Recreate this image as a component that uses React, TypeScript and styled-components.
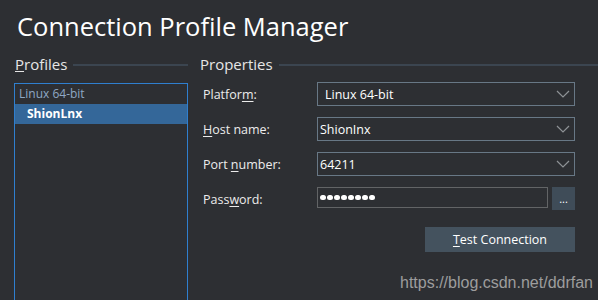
import React from "react";
import styled, { createGlobalStyle } from "styled-components";

const Global = createGlobalStyle`
  html, body { margin: 0; padding: 0; background: #2d2f33; overflow: hidden; }
  body { font-family: "Open Sans", "Noto Sans", sans-serif; color: #f0f0f0; }
`;

const Page = styled.div`
  position: relative;
  width: 598px;
  height: 300px;
  overflow: hidden;
  background: #2d2f33;
`;

const Title = styled.h1`
  margin: 0;
  padding: 8px 0 0 17px;
  height: 50px;
  box-sizing: border-box;
  font-size: 25.5px;
  font-weight: 400;
  line-height: 36px;
  color: #ffffff;
`;

const Columns = styled.div`
  display: flex;
  padding-left: 14px;
  gap: 12px;
`;

const LeftCol = styled.div`
  width: 174px;
  display: flex;
  flex-direction: column;
`;

const RightCol = styled.div`
  flex: 1;
  display: flex;
  flex-direction: column;
`;

const GroupHeader = styled.div<{ $indent: number }>`
  display: flex;
  align-items: center;
  height: 28px;
  padding-left: ${(p) => p.$indent}px;
  font-size: 15px;
  color: #e6e6e6;
  &::after {
    content: "";
    flex: 1;
    height: 2px;
    margin-left: 6px;
    margin-top: 2px;
    background: #3b4550;
  }
`;

const ListBox = styled.div`
  margin-top: 5px;
  height: 240px;
  border: 1px solid #2f7fcf;
  display: flex;
  flex-direction: column;
`;

const ListItem = styled.div<{ $selected?: boolean; $level: number }>`
  height: 20px;
  line-height: 19px;
  padding-left: ${(p) => 4 + p.$level * 8}px;
  font-size: 12px;
  font-weight: ${(p) => (p.$selected ? 700 : 400)};
  color: ${(p) => (p.$selected ? "#ffffff" : "#8fa8c4")};
  background: ${(p) => (p.$selected ? "#346799" : "transparent")};
`;

const Form = styled.div`
  margin-top: 4px;
  display: grid;
  grid-template-columns: 114px 258px;
  grid-auto-rows: 24px;
  row-gap: 11px;
  padding-left: 3px;
`;

const Label = styled.label`
  display: flex;
  align-items: center;
  font-size: 12.5px;
  color: #ececec;
  u { text-decoration-thickness: 1px; text-underline-offset: 2px; }
`;

const Combo = styled.div<{ $pad: number }>`
  height: 24px;
  box-sizing: border-box;
  border: 1px solid #687886;
  display: flex;
  align-items: center;
  padding-left: ${(p) => p.$pad}px;
  padding-right: 4px;
  font-size: 12.5px;
  color: #ffffff;
`;

const ComboText = styled.span`
  flex: 1;
`;

const PasswordRow = styled.div`
  display: flex;
  gap: 4px;
  align-items: flex-start;
`;

const PasswordBox = styled.div`
  flex: 1;
  height: 21px;
  box-sizing: border-box;
  border: 1px solid #626466;
  display: flex;
  align-items: center;
  padding-left: 2px;
  gap: 1.5px;
`;

const Dot = styled.span`
  width: 5.5px;
  height: 5.5px;
  border-radius: 50%;
  background: #ffffff;
`;

const EllipsisButton = styled.div`
  width: 23px;
  height: 23px;
  background: #3f4c58;
  color: #ffffff;
  font-size: 11px;
  display: flex;
  align-items: center;
  justify-content: center;
  line-height: 1;
`;

const ButtonRow = styled.div`
  display: flex;
  justify-content: flex-end;
  width: 375px;
  margin-top: 16px;
`;

const Button = styled.div`
  width: 150px;
  height: 25px;
  background: #44525e;
  color: #ffffff;
  font-size: 12.5px;
  display: flex;
  align-items: center;
  justify-content: center;
  u { text-decoration-thickness: 1px; text-underline-offset: 2px; }
`;

const Watermark = styled.div`
  position: absolute;
  left: 400px;
  top: 274px;
  font-family: "Liberation Sans", Arial, sans-serif;
  font-size: 16px;
  color: #a3a3a3;
  opacity: 0.95;
`;

const Chevron = () => (
  <svg width="14" height="8" viewBox="0 0 14 8">
    <path d="M1 1 L7 7 L13 1" fill="none" stroke="#8e9296" strokeWidth="1.2" />
  </svg>
);

export default function App() {
  return (
    <Page>
      <Global />
      <Title>Connection Profile Manager</Title>
      <Columns>
        <LeftCol>
          <GroupHeader $indent={1}>
            <span>
              <u>P</u>rofiles
            </span>
          </GroupHeader>
          <ListBox>
            <ListItem $level={0}>Linux 64-bit</ListItem>
            <ListItem $level={1} $selected>
              ShionLnx
            </ListItem>
          </ListBox>
        </LeftCol>
        <RightCol>
          <GroupHeader $indent={0}>
            <span>Properties</span>
          </GroupHeader>
          <Form>
            <Label>
              <span>
                Platfor<u>m</u>:
              </span>
            </Label>
            <Combo $pad={7}>
              <ComboText>Linux 64-bit</ComboText>
              <Chevron />
            </Combo>
            <Label>
              <span>
                <u>H</u>ost name:
              </span>
            </Label>
            <Combo $pad={2}>
              <ComboText>ShionInx</ComboText>
              <Chevron />
            </Combo>
            <Label>
              <span>
                Port <u>n</u>umber:
              </span>
            </Label>
            <Combo $pad={2}>
              <ComboText>64211</ComboText>
              <Chevron />
            </Combo>
            <Label>
              <span>
                Pass<u>w</u>ord:
              </span>
            </Label>
            <PasswordRow>
              <PasswordBox>
                {Array.from({ length: 8 }).map((_, i) => (
                  <Dot key={i} />
                ))}
              </PasswordBox>
              <EllipsisButton>...</EllipsisButton>
            </PasswordRow>
          </Form>
          <ButtonRow>
            <Button>
              <span>
                <u>T</u>est Connection
              </span>
            </Button>
          </ButtonRow>
        </RightCol>
      </Columns>
      <Watermark>https://blog.csdn.net/ddrfan</Watermark>
    </Page>
  );
}
